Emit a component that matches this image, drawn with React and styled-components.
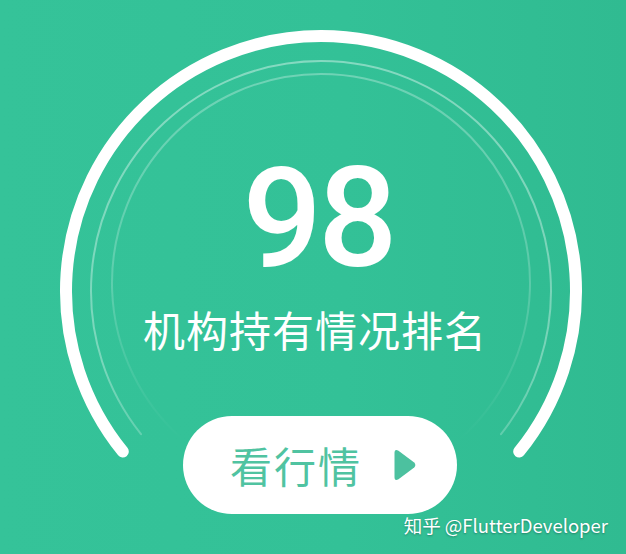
import React from "react";
import styled, { createGlobalStyle } from "styled-components";

const Global = createGlobalStyle`
  html, body { margin: 0; padding: 0; }
  body { width: 626px; height: 554px; overflow: hidden; }
`;

const Card = styled.div`
  position: relative;
  width: 626px;
  height: 554px;
  overflow: hidden;
  background: linear-gradient(90deg, #35c399 0%, #33c197 55%, #30bb91 100%);
  font-family: "Noto Sans CJK SC", "Noto Sans", sans-serif;
`;

const GaugeArt = styled.svg`
  position: absolute;
  inset: 0;
  width: 626px;
  height: 554px;
  pointer-events: none;
`;

const Content = styled.div`
  position: relative;
  display: flex;
  flex-direction: column;
  align-items: center;
  padding-top: 148px;
  padding-left: 14px;
`;

const Score = styled.div`
  font-family: Roboto, "Noto Sans", sans-serif;
  font-weight: 500;
  font-size: 140px;
  line-height: 1;
  color: #ffffff;
  letter-spacing: -4px;
  margin-right: 4px;
`;

const Label = styled.div`
  margin-top: 20px;
  font-size: 42px;
  line-height: 1;
  color: #ffffff;
  letter-spacing: 1px;
  margin-right: 10px;
`;

const Button = styled.button`
  margin-top: 66px;
  width: 274px;
  height: 98px;
  border: none;
  border-radius: 49px;
  background: #ffffff;
  display: flex;
  align-items: center;
  justify-content: center;
  gap: 32px;
  padding: 0 0 0 6px;
  cursor: pointer;
  font-family: "Noto Sans CJK SC", "Noto Sans", sans-serif;
`;

const ButtonText = styled.span`
  font-size: 42px;
  line-height: 1;
  color: #50c3a1;
  letter-spacing: 2px;
`;

const Watermark = styled.div`
  position: absolute;
  right: 18px;
  bottom: 20px;
  font-size: 18.5px;
  line-height: 1;
  color: #ffffff;
  text-shadow: 0 1px 2px rgba(0, 0, 0, 0.3);
  white-space: nowrap;
`;

function arcPath(cx, cy, r, a0, a1) {
  const rad = (d) => (d * Math.PI) / 180;
  const x0 = cx + r * Math.cos(rad(a0));
  const y0 = cy + r * Math.sin(rad(a0));
  const x1 = cx + r * Math.cos(rad(a1));
  const y1 = cy + r * Math.sin(rad(a1));
  return `M ${x0.toFixed(1)} ${y0.toFixed(1)} A ${r} ${r} 0 1 1 ${x1.toFixed(1)} ${y1.toFixed(1)}`;
}

function Gauge() {
  return (
    <GaugeArt viewBox="0 0 626 554">
      <defs>
        <linearGradient id="fadeInner" x1="0" y1="60" x2="0" y2="440" gradientUnits="userSpaceOnUse">
          <stop offset="0" stopColor="#fff" stopOpacity="0.3" />
          <stop offset="0.6" stopColor="#fff" stopOpacity="0.2" />
          <stop offset="1" stopColor="#fff" stopOpacity="0" />
        </linearGradient>
        <linearGradient id="fadeMid" x1="0" y1="60" x2="0" y2="440" gradientUnits="userSpaceOnUse">
          <stop offset="0" stopColor="#fff" stopOpacity="0.4" />
          <stop offset="0.8" stopColor="#fff" stopOpacity="0.34" />
          <stop offset="1" stopColor="#fff" stopOpacity="0.22" />
        </linearGradient>
      </defs>
      <path d={arcPath(321, 291, 255, 141, 39)} fill="none" stroke="#fff" strokeWidth="12" strokeLinecap="round" />
      <path d={arcPath(321, 291, 230, 141.5, 38.5)} fill="none" stroke="url(#fadeMid)" strokeWidth="2" strokeLinecap="round" />
      <path d={arcPath(321, 283, 209, 132, 48)} fill="none" stroke="url(#fadeInner)" strokeWidth="2" strokeLinecap="round" />
    </GaugeArt>
  );
}

function PlayIcon() {
  return (
    <svg width="22" height="32" viewBox="0 0 22 32">
      <path
        d="M4.5 1.8 L20.2 13.6 Q22.5 16 20.2 18.4 L4.5 30.2 Q0.5 32.6 0.5 28 V4 Q0.5 -0.6 4.5 1.8 Z"
        fill="#4cc19f"
      />
    </svg>
  );
}

export default function App() {
  return (
    <>
      <Global />
      <Card>
        <Gauge />
        <Content>
          <Score>98</Score>
          <Label>机构持有情况排名</Label>
          <Button>
            <ButtonText>看行情</ButtonText>
            <PlayIcon />
          </Button>
        </Content>
        <Watermark>知乎 @FlutterDeveloper</Watermark>
      </Card>
    </>
  );
}
